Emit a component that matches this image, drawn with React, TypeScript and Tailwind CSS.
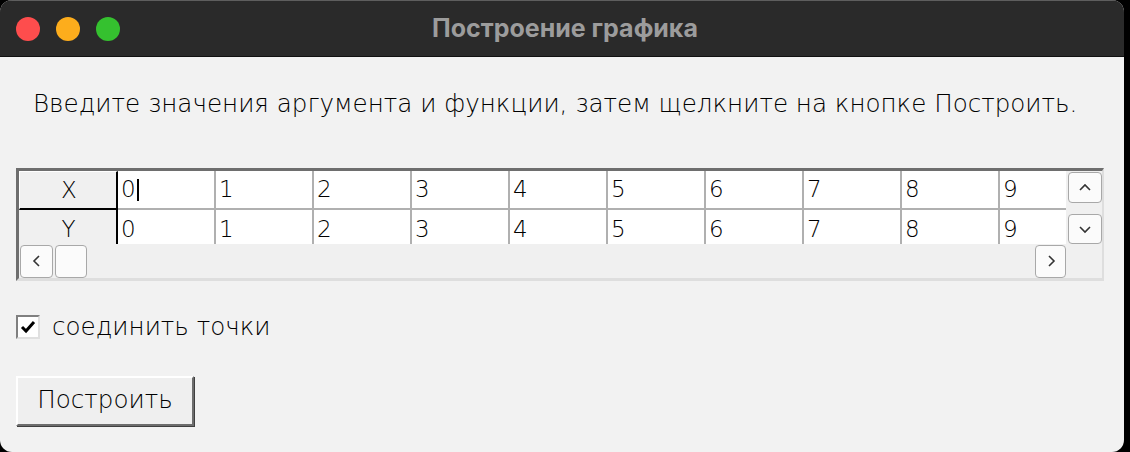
import React from "react";

const cols = ["0", "1", "2", "3", "4", "5", "6", "7", "8", "9"];

function Arrow({ dir }: { dir: "up" | "down" | "left" | "right" }) {
  const d = {
    up: "M3 10 L8 5 L13 10",
    down: "M3 6 L8 11 L13 6",
    left: "M10 3 L5 8 L10 13",
    right: "M6 3 L11 8 L6 13",
  }[dir];
  return (
    <svg width="16" height="16" viewBox="0 0 16 16" fill="none">
      <path d={d} stroke="#333" strokeWidth="1.6" />
    </svg>
  );
}

function ScrollBtn({ dir, className }: { dir: "up" | "down" | "left" | "right"; className?: string }) {
  return (
    <div
      className={
        "flex items-center justify-center rounded-[4px] border border-[#a8a8a8] bg-[#fbfbfb] " + (className ?? "")
      }
    >
      <Arrow dir={dir} />
    </div>
  );
}

function Row({ label, first }: { label: string; first?: boolean }) {
  return (
    <div className={"flex h-[39px] shrink-0 " + (first ? "border-b-2 border-b-[#b0b0b0]" : "")}>
      <div
        className={
          "flex w-[99px] shrink-0 items-center justify-center border-r-2 border-r-black bg-[#f0f0f0] text-[23px] font-light " +
          (first ? "-mb-[2px] border-b-2 border-b-black border-t border-l border-t-white border-l-white" : "")
        }
      >
        <span className="pl-[2px]">{label}</span>
      </div>
      {cols.map((c, i) => (
        <div
          key={c}
          className="flex w-[98px] shrink-0 items-center border-r-2 border-r-[#b0b0b0] bg-white pl-[3px] text-[23px] font-light"
        >
          <span>{c}</span>
          {first && i === 0 && <span className="ml-[1px] h-[22px] w-[2px] bg-black" />}
        </div>
      ))}
    </div>
  );
}

export default function App() {
  return (
    <div className="h-[452px] w-[1130px] bg-black" style={{ fontFamily: "'DejaVu Sans', sans-serif" }}>
      <div className="flex h-[452px] w-[1124px] flex-col overflow-hidden rounded-[12px] bg-[#f2f2f2]">
        {/* title bar */}
        <div className="relative flex h-[57px] shrink-0 items-center border-b border-b-[#111] border-t border-t-[#5e5e5e] bg-[#2a2a2a]">
          <div className="ml-[16px] flex gap-[16px]">
            <span className="h-[24px] w-[24px] rounded-full bg-[#fe4d4d]" />
            <span className="h-[24px] w-[24px] rounded-full bg-[#fdad1c]" />
            <span className="h-[24px] w-[24px] rounded-full bg-[#35c12f]" />
          </div>
          <div
            className="absolute inset-x-0 pl-[6px] text-center text-[25px] font-bold text-[#9c9c9c]"
            style={{ fontFamily: "Inter, 'Liberation Sans', sans-serif" }}
          >
            Построение графика
          </div>
        </div>

        {/* body */}
        <div className="flex flex-col px-[16px] text-black">
          <div className="mt-[30px] pl-[17px] text-[24.6px] leading-[34px] font-light">
            Введите значения аргумента и функции, затем щелкните на кнопке Построить.
          </div>

          {/* grid */}
          <div className="mt-[47px] flex h-[113px] w-[1088px] border-t-[3px] border-l-[3px] border-t-[#6e6e6e] border-l-[#6e6e6e] border-b-[3px] border-r-2 border-b-[#dedede] border-r-[#dedede]">
            <div className="flex w-[1047px] flex-col overflow-hidden">
              <div className="flex h-[73px] flex-col overflow-hidden">
                <Row label="X" first />
                <Row label="Y" />
              </div>
              <div className="flex h-[34px] items-center bg-[#f0f0f0]">
                <ScrollBtn dir="left" className="ml-[1px] h-[33px] w-[33px]" />
                <div className="ml-[2px] h-[33px] w-[32px] rounded-[4px] border border-[#a8a8a8] bg-[#fbfbfb]" />
                <div className="flex-1" />
                <ScrollBtn dir="right" className="h-[33px] w-[31px]" />
              </div>
            </div>
            <div className="flex w-[36px] flex-col bg-[#f0f0f0]">
              <ScrollBtn dir="up" className="ml-[2px] mt-[1px] h-[31px] w-[34px]" />
              <ScrollBtn dir="down" className="ml-[2px] mt-[11px] h-[30px] w-[34px]" />
            </div>
          </div>

          {/* checkbox */}
          <div className="mt-[28px] flex items-center">
            <div className="flex h-[24px] w-[24px] items-center justify-center border-2 border-t-[#808080] border-l-[#808080] border-b-[#e0e0e0] border-r-[#e0e0e0] bg-white">
              <svg width="16" height="16" viewBox="0 0 16 16">
                <path d="M2 8 L6 12 L14 3" stroke="#000" strokeWidth="3" fill="none" />
              </svg>
            </div>
            <span className="ml-[12px] text-[24.6px] font-light">соединить точки</span>
          </div>

          {/* button */}
          <div className="mt-[30px]">
            <button className="flex h-[50px] w-[178px] items-center justify-center border-2 border-t-white border-l-white border-b-[#6d6d6d] border-r-[#6d6d6d] bg-[#efefef] text-[24.6px] font-light shadow-[1px_1px_0_#404040]">
              Построить
            </button>
          </div>
        </div>
      </div>
    </div>
  );
}
